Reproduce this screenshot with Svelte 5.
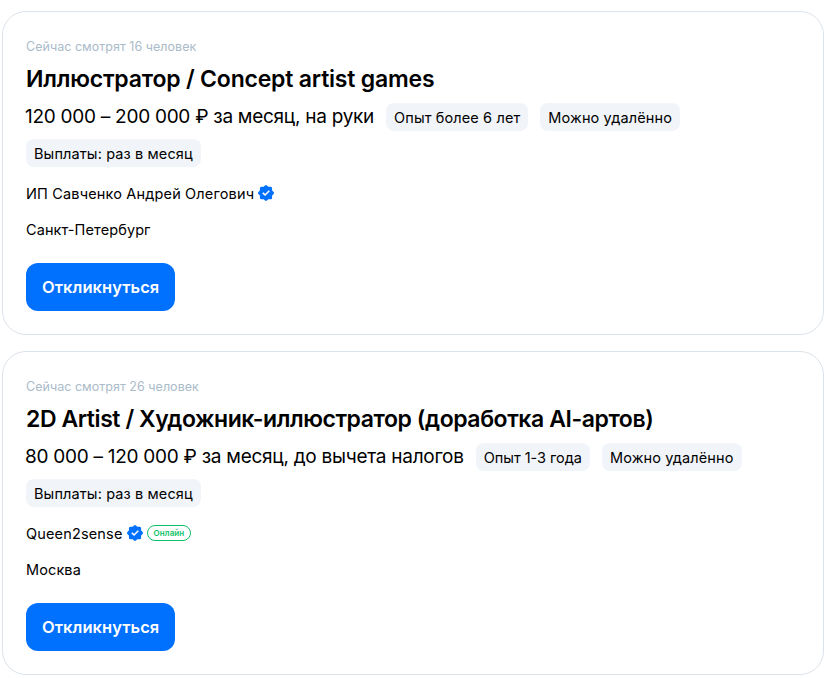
<script>
    const vacancies = [
        {
            id: 1,
            watching: "Сейчас смотрят 16 человек",
            title: "Иллюстратор / Concept artist games",
            salary: "120 000 – 200 000 ₽ за месяц, на руки",
            tags: ["Опыт более 6 лет", "Можно удалённо", "Выплаты: раз в месяц"],
            company: "ИП Савченко Андрей Олегович",
            online: false,
            city: "Санкт-Петербург",
        },
        {
            id: 2,
            watching: "Сейчас смотрят 26 человек",
            title: "2D Artist / Художник-иллюстратор (доработка AI-артов)",
            salary: "80 000 – 120 000 ₽ за месяц, до вычета налогов",
            tags: ["Опыт 1-3 года", "Можно удалённо", "Выплаты: раз в месяц"],
            company: "Queen2sense",
            online: true,
            city: "Москва",
        },
    ];
</script>

<main>
    {#each vacancies as vacancy (vacancy.id)}
        <article class="card">
            <div class="watching">{vacancy.watching}</div>
            <h2 class:long={vacancy.title.length > 40}>{vacancy.title}</h2>
            <div class="summary">
                <span class="salary">{vacancy.salary}</span>
                {#each vacancy.tags as tag}
                    <span class="tag" class:short={tag.length < 14}>{tag}</span>
                {/each}
            </div>
            <div class="company">
                <span class="name">{vacancy.company}</span>
                <svg class="verified" viewBox="0 0 16 16" width="16" height="16">
                    <path
                        fill="#0070ff"
                        d="M7.1.4Q8-.4 8.9.4L10.4 1.8H12.6Q14.1 1.8 14.1 3.3V5.6L15.6 7.1Q16.4 8 15.6 8.9L14.1 10.4V12.7Q14.1 14.2 12.6 14.2H10.4L8.9 15.6Q8 16.4 7.1 15.6L5.6 14.2H3.4Q1.9 14.2 1.9 12.7V10.4L.4 8.9Q-.4 8 .4 7.1L1.9 5.6V3.3Q1.9 1.8 3.4 1.8H5.6Z"
                    />
                    <path fill="none" stroke="#fff" stroke-width="1.6" d="M4.8 7.8 7.1 10 11.3 5.8" />
                </svg>
                {#if vacancy.online}
                    <span class="online">Онлайн</span>
                {/if}
            </div>
            <div class="city">{vacancy.city}</div>
            <button>Откликнуться</button>
        </article>
    {/each}
</main>

<style>
    :global(body) {
        background: #fff;
    }

    main {
        display: flex;
        flex-direction: column;
        gap: 16px;
        padding: 11px 10px 0 2px;
        font-family: Inter, "Liberation Sans", sans-serif;
        color: #000;
    }

    .card {
        box-sizing: border-box;
        height: 324px;
        padding: 25px 23px 23px;
        border: 1px solid #dce3eb;
        border-radius: 24px;
        white-space: nowrap;
    }

    .watching {
        font-size: 12.5px;
        line-height: 19px;
        letter-spacing: 0.03px;
        color: #aabbca;
    }

    h2 {
        margin: 8px 0 0;
        font-size: 23px;
        font-weight: 600;
        line-height: 30px;
        letter-spacing: -0.2px;
    }

    h2.long {
        letter-spacing: -0.43px;
    }

    .summary {
        display: flex;
        flex-wrap: wrap;
        gap: 8px 12px;
        margin-top: 9px;
    }

    .salary {
        margin-left: -1px;
        font-size: 19px;
        line-height: 27px;
        letter-spacing: -0.27px;
    }

    .tag {
        box-sizing: border-box;
        height: 28px;
        padding: 0 8px;
        border-radius: 8px;
        background: #f1f4f9;
        font-size: 14.5px;
        line-height: 29px;
        letter-spacing: 0.12px;
    }

    .tag.short {
        letter-spacing: -0.03px;
    }

    .company {
        display: flex;
        align-items: center;
        gap: 4px;
        height: 24px;
        margin-top: 14px;
        font-size: 14.5px;
        letter-spacing: 0.16px;
    }

    .name {
        line-height: 24px;
        padding-top: 1px;
    }

    .online {
        box-sizing: border-box;
        height: 16px;
        padding: 0 6px;
        border: 1px solid #0dc267;
        border-radius: 8px;
        color: #0dc267;
        font-size: 8px;
        font-weight: 600;
        line-height: 14px;
        letter-spacing: 0.1px;
    }

    .city {
        margin-top: 13px;
        font-size: 14.5px;
        line-height: 24px;
        letter-spacing: 0.1px;
    }

    button {
        display: block;
        height: 48px;
        margin-top: 21px;
        padding: 0 16px;
        border: none;
        border-radius: 12px;
        background: #0070ff;
        color: #fff;
        font-family: inherit;
        font-size: 16.5px;
        font-weight: 600;
        line-height: 49px;
        letter-spacing: 0.05px;
        cursor: pointer;
    }
</style>
